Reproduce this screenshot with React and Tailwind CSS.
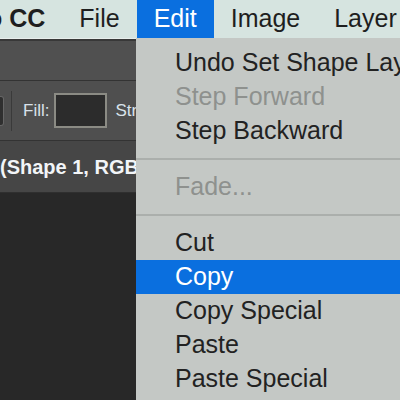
import React from "react";

const items = [
  { label: "Undo Set Shape Layer Fill Color" },
  { label: "Step Forward", disabled: true },
  { label: "Step Backward" },
  { sep: true },
  { label: "Fade...", disabled: true },
  { sep: true },
  { label: "Cut" },
  { label: "Copy", active: true },
  { label: "Copy Special" },
  { label: "Paste" },
  { label: "Paste Special" },
];

export default function App() {
  return (
    <div
      className="relative w-[400px] h-[400px] overflow-hidden bg-[#282828]"
      style={{ fontFamily: '"Liberation Sans", Arial, sans-serif' }}
    >
      {/* mac menu bar */}
      <div className="h-[38px] bg-[#d6e4e0] flex items-center text-[25px] text-[#1e1e1e] whitespace-nowrap">
        <div className="font-bold ml-[-13px] pr-[17px]">o CC</div>
        <div className="px-[17px] h-full flex items-center">File</div>
        <div className="px-[17px] h-full flex items-center bg-[#0a6fdf] text-white">Edit</div>
        <div className="px-[17px] h-full flex items-center">Image</div>
        <div className="px-[17px] h-full flex items-center">Layer</div>
      </div>

      {/* photoshop panels */}
      <div className="w-[136px]">
        <div className="h-[3px] bg-[#383838] border-t border-[#e8eeec]" />
        <div className="h-[40px] bg-[#505050] border-b border-[#333]" />
        <div className="h-[60px] bg-[#4f4f4f] border-b border-[#333] flex items-center whitespace-nowrap overflow-hidden">
          <div className="shrink-0 w-[4px] h-[30px] bg-[#2f2f2f] rounded-r-[3px] border border-l-0 border-[#666]" />
          <div className="shrink-0 ml-[7px] w-px h-[40px] bg-[#3a3a3a]" />
          <span className="shrink-0 ml-[11px] text-[17px] text-[#d9e2ea]">Fill:</span>
          <div className="shrink-0 ml-[5px] w-[53px] h-[35px] border-2 border-[#8b8b84] bg-[#2c2c2c]" />
          <span className="shrink-0 ml-[8px] text-[17px] text-[#d9e2ea]">Stroke:</span>
        </div>
        <div className="h-[52px] bg-[#464646] border-b border-[#2f2f2f] flex items-center whitespace-nowrap overflow-hidden">
          <span className="shrink-0 font-bold text-[20px] text-[#f2f5f8]">(Shape 1, RGB/8)</span>
        </div>
      </div>

      {/* edit menu */}
      <div className="absolute left-[136px] top-[38px] w-[264px] h-[362px] bg-[#c4c8c5] pt-[8px] text-[25px] whitespace-nowrap overflow-hidden">
        {items.map((it, i) =>
          it.sep ? (
            <div key={i} className="h-[22px] flex items-center">
              <div className="w-full h-[2px] bg-[#abafac]" />
            </div>
          ) : (
            <div
              key={i}
              className={
                "h-[34px] pl-[39px] flex items-center " +
                (it.active
                  ? "bg-[#0a6fdf] text-white"
                  : it.disabled
                  ? "text-[#8e918e]"
                  : "text-[#222222]")
              }
            >
              {it.label}
            </div>
          )
        )}
      </div>
    </div>
  );
}
